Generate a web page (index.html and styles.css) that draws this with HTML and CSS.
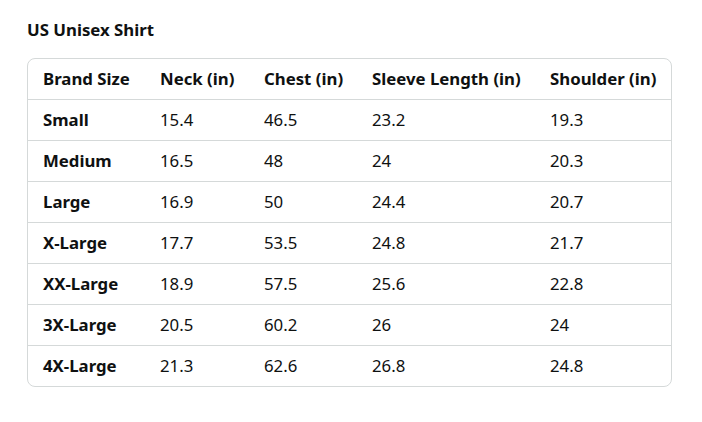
FILE: index.html
```html
<!DOCTYPE html>
<html>
<head>
<meta charset="utf-8">
<link rel="stylesheet" href="styles.css">
</head>
<body>
<div class="page">
  <h2 class="title">US Unisex Shirt</h2>
  <div class="box">
    <table class="chart">
      <colgroup>
        <col class="c1"><col class="c2"><col class="c3"><col class="c4"><col class="c5">
      </colgroup>
      <thead>
        <tr><th>Brand Size</th><th>Neck (in)</th><th>Chest (in)</th><th>Sleeve Length (in)</th><th>Shoulder (in)</th></tr>
      </thead>
      <tbody>
        <tr><th>Small</th><td>15.4</td><td>46.5</td><td>23.2</td><td>19.3</td></tr>
        <tr><th>Medium</th><td>16.5</td><td>48</td><td>24</td><td>20.3</td></tr>
        <tr><th>Large</th><td>16.9</td><td>50</td><td>24.4</td><td>20.7</td></tr>
        <tr><th>X-Large</th><td>17.7</td><td>53.5</td><td>24.8</td><td>21.7</td></tr>
        <tr><th>XX-Large</th><td>18.9</td><td>57.5</td><td>25.6</td><td>22.8</td></tr>
        <tr><th>3X-Large</th><td>20.5</td><td>60.2</td><td>26</td><td>24</td></tr>
        <tr><th>4X-Large</th><td>21.3</td><td>62.6</td><td>26.8</td><td>24.8</td></tr>
      </tbody>
    </table>
  </div>
</div>
</body>
</html>
```
FILE: styles.css
```css
html, body { margin: 0; padding: 0; background: #fff; }
body { font-family: "Noto Sans", "Open Sans", sans-serif; color: #0f1111; }
.page { padding: 20px 30px 0 27px; width: 645px; }
.title { margin: 0 0 18px 0; font-size: 16.8px; font-weight: 700; line-height: 20px; }
.box { border: 1px solid #d5d9d9; border-radius: 8px; overflow: hidden; }
.chart { border-collapse: collapse; width: 100%; table-layout: fixed; font-size: 16.8px; }
.c1 { width: 117px; } .c2 { width: 104px; } .c3 { width: 108px; } .c4 { width: 178px; } .c5 { width: auto; }
.chart th, .chart td { text-align: left; padding: 0 0 0 15px; height: 40px; line-height: 20px; white-space: nowrap; }
.chart th { font-weight: 700; }
.chart td { font-weight: 400; }
.chart tbody tr { border-top: 1px solid #d5d9d9; }
```
